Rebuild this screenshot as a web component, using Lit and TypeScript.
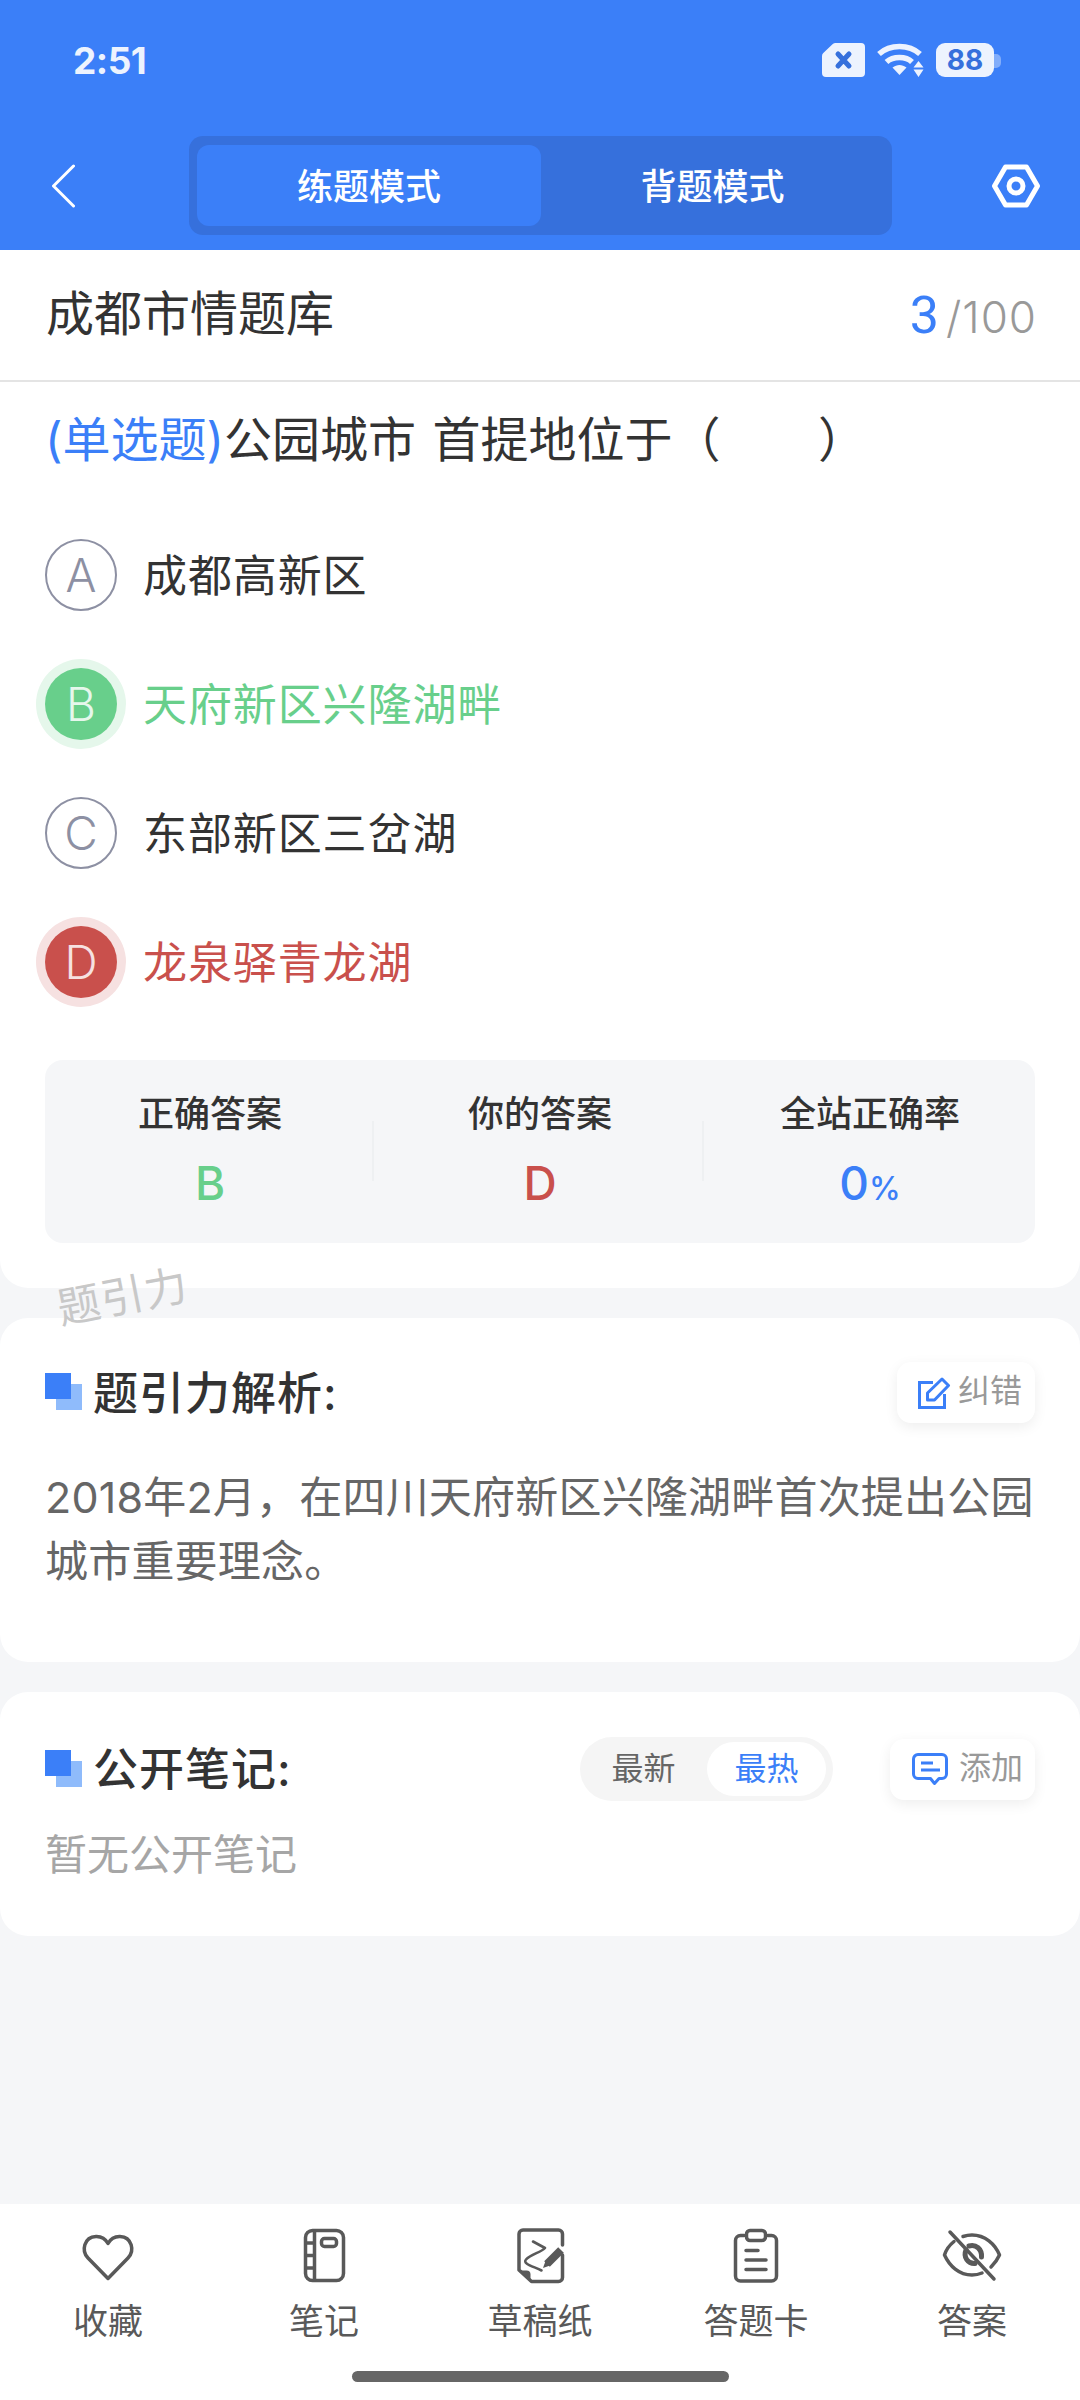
import { LitElement, html, css, svg } from "lit";
import { customElement } from "lit/decorators.js";
import { classMap } from "lit/directives/class-map.js";

type OptionState = "idle" | "right" | "wrong";

const options: { key: string; text: string; state: OptionState }[] = [
  { key: "A", text: "成都高新区", state: "idle" },
  { key: "B", text: "天府新区兴隆湖畔", state: "right" },
  { key: "C", text: "东部新区三岔湖", state: "idle" },
  { key: "D", text: "龙泉驿青龙湖", state: "wrong" },
];

// each one drawn in a 60x56 box, centred in its tab
const tabs = [
  {
    label: "收藏",
    icon: svg`<path d="M30 50.500 10 30C3 23 6 9 18 8.500c5.500-.2 9.500 2.500 12 7 2.500-4.500 6.500-7.200 12-7C54 9 57 23 50 30z"/>`,
  },
  {
    label: "笔记",
    icon: svg`<rect x="11.500" y="2.500" width="38" height="50" rx="7"/><path d="M20.500 3v49M12 15h8M12 27.500h8M12 40h8"/><rect x="27.500" y="10.500" width="15" height="8" rx="3"/>`,
  },
  {
    label: "草稿纸",
    icon: svg`<path d="M52.500 17V6a4 4 0 0 0-4-4H13a4 4 0 0 0-4 4v36l12.500 11.500H48.500a4 4 0 0 0 4-4V27"/><path d="M9.500 42.500h7a4 4 0 0 1 4 4v6.500z" fill="#595959" stroke="none"/><path d="M23 13.500 35 20c-4 4.500-14 6-19 11.500-4 4.500 8 7 15.500 11" stroke-width="2.600"/><path d="m37 36 14-14" stroke-width="8" stroke-linecap="butt"/><path d="m33 40 2.500-7 4.500 4.500z" fill="#595959" stroke="none"/>`,
  },
  {
    label: "答题卡",
    icon: svg`<path d="M18 7.500h-3.500a5 5 0 0 0-5 5V48a5 5 0 0 0 5 5h31a5 5 0 0 0 5-5V12.500a5 5 0 0 0-5-5H42"/><rect x="20.500" y="2.500" width="19" height="10" rx="3.500"/><path d="M20 22.500h12M20 32h20M20 41.500h20"/>`,
  },
  {
    label: "答案",
    icon: svg`<path d="M12 13.500C7 17.500 4 22 2.500 27c5 11 14.500 20 27.500 20 3.500 0 7-.7 10-2M21 8.500C24 7.500 27 7 30 7c13 0 23 9 27.500 20-2 4.500-5 8.500-8.500 12"/><path d="M24 22c-3 7 2 14 9 13.500" stroke-width="5"/><path d="M27 18c7-2 13 3 12.500 11" stroke-width="5"/><path d="M8 4 52 51"/>`,
  },
];

@customElement("app-root")
export class AppRoot extends LitElement {
  static styles = css`
    :host {
      display: block;
      font-family: Inter, "Noto Sans CJK SC", sans-serif;
      color: #333;
    }

    .page {
      height: 2400px;
      display: flex;
      flex-direction: column;
      background: #f5f6f8;
      position: relative;
      overflow: hidden;
    }

    .header {
      height: 250px;
      flex: none;
      background: #3b7ff8;
      color: #fff;
    }

    .status {
      height: 120px;
      display: flex;
      align-items: center;
      padding: 0 86px 0 73px;
    }

    .time {
      font-size: 37px;
      font-weight: 700;
      letter-spacing: -0.5px;
      color: #edf3fe;
      flex: 1;
    }

    .status-icons {
      display: flex;
      align-items: center;
      gap: 12px;
    }

    .battery {
      position: relative;
      width: 58px;
      height: 34px;
      border-radius: 9px;
      background: #edf3fe;
      color: #3670dc;
      font-size: 28px;
      font-weight: 700;
      display: flex;
      align-items: center;
      justify-content: center;
    }

    .battery::after {
      content: "";
      position: absolute;
      right: -7px;
      top: 11px;
      width: 7px;
      height: 14px;
      border-radius: 0 5px 5px 0;
      background: #82adfa;
    }

    .nav {
      display: flex;
      align-items: center;
      padding: 16px 40px 0 51px;
    }

    .back {
      width: 138px;
      flex: none;
      display: flex;
    }

    .segment {
      width: 703px;
      height: 99px;
      box-sizing: border-box;
      flex: none;
      padding: 9px 8px;
      display: flex;
      background: #3670dc;
      border-radius: 14px;
    }

    .seg-item {
      flex: 1;
      display: flex;
      align-items: center;
      justify-content: center;
      padding-bottom: 4px;
      font-size: 36px;
      font-weight: 500;
      border-radius: 12px;
    }

    .seg-item.on {
      flex: none;
      width: 344px;
      background: #3b7ff8;
    }

    .gear {
      margin-left: auto;
      display: flex;
    }

    .card {
      background: #fff;
      border-radius: 28px;
      margin-top: 30px;
      flex: none;
    }

    .card.first {
      margin-top: 0;
      border-radius: 0 0 28px 28px;
      padding-bottom: 45px;
    }

    .title-row {
      height: 130px;
      display: flex;
      align-items: center;
      justify-content: space-between;
      padding: 0 43px 0 46px;
      border-bottom: 2px solid #e4e4e4;
    }

    .bank {
      font-size: 48px;
      line-height: 1;
      padding-bottom: 3px;
    }

    .count {
      display: flex;
      align-items: baseline;
      color: #999;
      font-size: 44px;
      font-weight: 300;
      letter-spacing: 1px;
    }

    .count b {
      font-family: Roboto, sans-serif;
      font-weight: 400;
      font-size: 52px;
      color: #3b7ff8;
      margin-right: 6px;
    }

    .question {
      height: 128px;
      box-sizing: border-box;
      padding: 26px 0 0 45px;
      font-size: 48px;
      line-height: 64px;
      white-space: pre;
      word-spacing: 3px;
    }

    .question span {
      color: #3b7ff8;
    }

    .option {
      height: 129px;
      display: flex;
      align-items: center;
      padding-left: 45px;
      font-size: 44px;
      letter-spacing: 0.9px;
    }

    .option-text {
      padding-bottom: 3px;
    }

    .letter {
      width: 72px;
      height: 72px;
      box-sizing: border-box;
      flex: none;
      margin-right: 26px;
      border-radius: 50%;
      border: 2px solid #8d90a3;
      color: #8d90a3;
      font-size: 46px;
      font-weight: 300;
      display: flex;
      align-items: center;
      justify-content: center;
      letter-spacing: 0;
    }

    .option.right {
      color: #68cf8b;
    }

    .option.wrong {
      color: #c9504c;
    }

    .option.right .letter {
      background: #68cf8b;
      border: none;
      color: #e6f7ec;
      box-shadow: 0 0 0 9px #e5f7eb;
    }

    .option.wrong .letter {
      background: #c9504c;
      border: none;
      color: #f6e1e1;
      box-shadow: 0 0 0 9px #f6e1e1;
    }

    .stats {
      margin: 34px 45px 0;
      height: 183px;
      display: flex;
      background: #f5f6f8;
      border-radius: 18px;
    }

    .stat {
      flex: 1;
      position: relative;
      display: flex;
      flex-direction: column;
      align-items: center;
      padding-top: 32px;
      font-size: 36px;
      font-weight: 500;
      line-height: 44px;
    }

    .stat + .stat::before {
      content: "";
      position: absolute;
      left: -3px;
      top: 61px;
      height: 60px;
      border-left: 2px solid #eef0f2;
    }

    .stat-value {
      margin-top: 25px;
      font-size: 46px;
      font-weight: 500;
      line-height: 44px;
    }

    .stat-value small {
      font-size: 32px;
    }

    .green {
      color: #68cf8b;
    }

    .red {
      color: #c9504c;
    }

    .blue {
      color: #3b7ff8;
    }

    .analysis {
      padding: 44px 45px 69px;
    }

    .notes {
      padding: 45px 45px 51px;
    }

    .sec-head {
      display: flex;
      align-items: center;
    }

    .mark {
      position: relative;
      width: 37px;
      height: 37px;
      flex: none;
      margin: 0 11px 2px 0;
    }

    .mark::before,
    .mark::after {
      content: "";
      position: absolute;
      width: 26px;
      height: 26px;
    }

    .mark::before {
      right: 0;
      bottom: 0;
      background: #8fbbfb;
    }

    .mark::after {
      left: 0;
      top: 0;
      background: #3b7ff8;
    }

    .sec-title {
      font-size: 45px;
      font-weight: 500;
      line-height: 50px;
      flex: 1;
      letter-spacing: 1px;
      margin-top: 2px;
    }

    .chip {
      height: 61px;
      box-sizing: border-box;
      display: flex;
      align-items: center;
      border-radius: 14px;
      background: #fff;
      box-shadow: 0 4px 14px rgba(0, 0, 0, 0.07);
      font-size: 32px;
      line-height: 40px;
      color: #999;
    }

    .chip span {
      padding-bottom: 3px;
    }

    .chip.fix {
      width: 138px;
      padding-left: 21px;
      gap: 7px;
    }

    .chip.add {
      width: 145px;
      margin-left: 57px;
      padding-left: 22px;
      gap: 11px;
    }

    .body-text {
      margin: 42px 0 0;
      font-size: 43px;
      line-height: 64px;
      color: #666;
      letter-spacing: 0.2px;
    }

    .sorter {
      width: 253px;
      height: 64px;
      box-sizing: border-box;
      padding: 5px 7px 5px 0;
      display: flex;
      border-radius: 32px;
      background: #f5f5f5;
      font-size: 32px;
      color: #666;
    }

    .sorter span {
      display: flex;
      align-items: center;
      justify-content: center;
      flex: 1;
      padding-bottom: 6px;
    }

    .sorter .on {
      flex: none;
      width: 119px;
      background: #fff;
      color: #3b7ff8;
      border-radius: 27px;
    }

    .empty {
      margin-top: 24px;
      font-size: 42px;
      line-height: 60px;
      color: #a6a6a6;
    }

    .watermark {
      position: absolute;
      left: 56px;
      top: 1262px;
      font-size: 43px;
      color: #c8c8c8;
      transform: rotate(-11deg);
      letter-spacing: 1px;
    }

    .bottom {
      margin-top: auto;
      height: 196px;
      flex: none;
      background: #fff;
    }

    .tabs {
      display: flex;
      padding-top: 24px;
    }

    .tab {
      flex: 1;
      display: flex;
      flex-direction: column;
      align-items: center;
      font-size: 35px;
      line-height: 48px;
      color: #595959;
    }

    .tab svg {
      fill: none;
      stroke: #595959;
      stroke-width: 3.5;
      stroke-linecap: round;
      stroke-linejoin: round;
      margin-bottom: 13px;
    }

    .indicator {
      width: 377px;
      height: 11px;
      margin: 26px auto 0;
      border-radius: 6px;
      background: #666;
    }
  `;

  private renderStatus() {
    return html`<div class="status">
      <span class="time">2:51</span>
      <div class="status-icons">
        <svg width="43" height="34" viewBox="0 0 43 34">
          <path d="M14 0h25a4 4 0 0 1 4 4v26a4 4 0 0 1-4 4H4a4 4 0 0 1-4-4V13a4 4 0 0 1 1.300-3L10.500 1.300A5 5 0 0 1 14 0z" fill="#edf3fe" />
          <path d="m16 11 11 12M27 11 16 23" stroke="#3670dc" stroke-width="5" stroke-linecap="round" />
        </svg>
        <svg width="47" height="34" viewBox="0 0 47 34">
          <g fill="none" stroke="#edf3fe" stroke-width="5.500">
            <path d="M2 11C13 1 32 1 43 11" />
            <path d="M9.500 19C16 13 29 13 35 19" />
          </g>
          <path d="M15.500 24.500c4.500-3.500 9.500-3.500 14 0L22.500 32z" fill="#edf3fe" />
          <path d="M41.500 18l5 6.500h-10zM41.500 34l-5-7.500h10z" fill="#edf3fe" />
        </svg>
        <span class="battery">88</span>
      </div>
    </div>`;
  }

  private renderNav() {
    return html`<div class="nav">
      <div class="back">
        <svg width="24" height="44" viewBox="0 0 24 44">
          <path d="M22.500 2 2.500 22l20 20" fill="none" stroke="#fff" stroke-width="3" stroke-linecap="round" stroke-linejoin="round" />
        </svg>
      </div>
      <div class="segment">
        <div class="seg-item on">练题模式</div>
        <div class="seg-item">背题模式</div>
      </div>
      <div class="gear">
        <svg width="48" height="44" viewBox="0 0 48 44">
          <path d="M13.500 3h21L45.500 22 34.500 41h-21L2.500 22z" fill="none" stroke="#fff" stroke-width="5" stroke-linejoin="round" />
          <circle cx="24" cy="22" r="7" fill="none" stroke="#fff" stroke-width="5" />
        </svg>
      </div>
    </div>`;
  }

  render() {
    return html`<div class="page">
      <div class="header">${this.renderStatus()} ${this.renderNav()}</div>

      <div class="card first">
        <div class="title-row">
          <span class="bank">成都市情题库</span>
          <span class="count"><b>3</b>/100</span>
        </div>
        <div class="question"><span>(单选题)</span>公园城市 首提地位于（　   ）</div>
        ${options.map(
          (o) => html`<div class=${classMap({ option: true, right: o.state === "right", wrong: o.state === "wrong" })}>
            <span class="letter">${o.key}</span><span class="option-text">${o.text}</span>
          </div>`,
        )}
        <div class="stats">
          <div class="stat">正确答案<span class="stat-value green">B</span></div>
          <div class="stat">你的答案<span class="stat-value red">D</span></div>
          <div class="stat">全站正确率<span class="stat-value blue">0<small>%</small></span></div>
        </div>
      </div>

      <div class="card analysis">
        <div class="sec-head">
          <span class="mark"></span>
          <span class="sec-title">题引力解析:</span>
          <div class="chip fix">
            <svg width="33" height="32" viewBox="0 0 33 32" fill="none" stroke="#3b7ff8" stroke-width="3">
              <path d="M15 5.500H1.500v25h25V17" />
              <path d="M9.500 23v-7L24 2l6.500 6.500L16.500 23z" stroke-linejoin="round" />
            </svg>
            <span>纠错</span>
          </div>
        </div>
        <p class="body-text">2018年2月，在四川天府新区兴隆湖畔首次提出公园城市重要理念。</p>
      </div>

      <div class="card notes">
        <div class="sec-head">
          <span class="mark"></span>
          <span class="sec-title">公开笔记:</span>
          <div class="sorter"><span>最新</span><span class="on">最热</span></div>
          <div class="chip add">
            <svg width="36" height="32" viewBox="0 0 36 32" fill="none" stroke="#3b7ff8" stroke-width="3">
              <path d="M6 1.500h24a4.500 4.500 0 0 1 4.500 4.500v15a4.500 4.500 0 0 1-4.500 4.500h-3l-4.500 5-4-5H6A4.500 4.500 0 0 1 1.500 21V6A4.500 4.500 0 0 1 6 1.500z" stroke-linejoin="round" />
              <path d="M9 10h12M9 17h19" />
            </svg>
            <span>添加</span>
          </div>
        </div>
        <div class="empty">暂无公开笔记</div>
      </div>

      <div class="watermark">题引力</div>

      <div class="bottom">
        <div class="tabs">
          ${tabs.map(
            (t) => html`<div class="tab">
              <svg width="60" height="56" viewBox="0 0 60 56">${t.icon}</svg>
              ${t.label}
            </div>`,
          )}
        </div>
        <div class="indicator"></div>
      </div>
    </div>`;
  }
}
